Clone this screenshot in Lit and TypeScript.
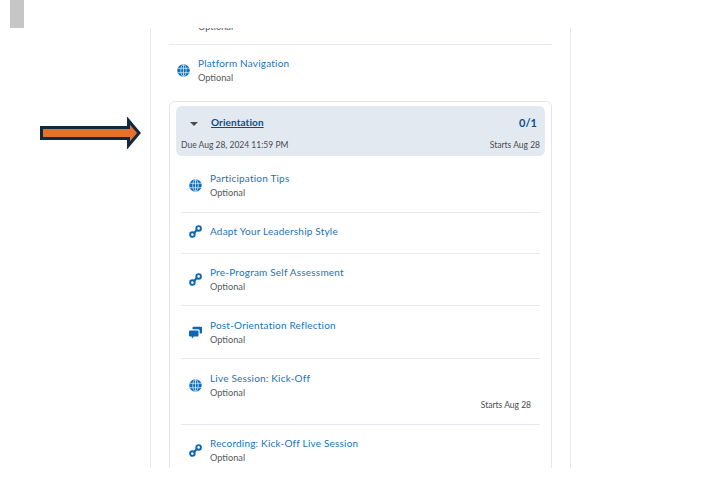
import { LitElement, html, css, svg } from "lit";
import { customElement } from "lit/decorators.js";

const globe = svg`<circle cx="6.500" cy="6.500" r="6.200" fill="#0a6fbe"/><g fill="none" stroke="#fff" stroke-width=".8" opacity=".85"><ellipse cx="6.500" cy="6.500" rx="2.700" ry="6"/><path d="M6.500 .5v12M1 4.300h11M1 8.700h11"/></g>`;
const link = svg`<g fill="none" stroke="#0a67b4" stroke-width="1.900"><circle cx="3.400" cy="9.600" r="2.300"/><circle cx="9.600" cy="3.400" r="2.300"/><path d="M4.600 8.400l3.800-3.800" stroke-width="2.100"/></g>`;
const chat = svg`<path fill="#0a67b4" d="M1 4.500h7.500q1 0 1 1v4q0 1-1 1H4.800L2.800 12.800V10.500H1q-1 0-1-1v-4q0-1 1-1z"/><path fill="#0a67b4" d="M4.500 .8h7.500q1 0 1 1v4.700q0 1-1 1h-1.300V4.800q0-1.500-1.500-1.500H3.500V1.800q0-1 1-1z"/>`;

interface Item { title: string; icon: unknown; optional: boolean; starts?: boolean; h: number; pad: number; }

const items: Item[] = [
  { title: "Participation Tips", icon: globe, optional: true, h: 57, pad: 15 },
  { title: "Adapt Your Leadership Style", icon: link, optional: false, h: 41, pad: 11 },
  { title: "Pre-Program Self Assessment", icon: link, optional: true, h: 52, pad: 11 },
  { title: "Post-Orientation Reflection", icon: chat, optional: true, h: 53, pad: 12 },
  { title: "Live Session: Kick-Off", icon: globe, optional: true, starts: true, h: 66, pad: 12 },
  { title: "Recording: Kick-Off Live Session", icon: link, optional: true, h: 53, pad: 11 },
];

@customElement("app-root")
export class AppRoot extends LitElement {
  static styles = css`
    :host { display: block; width: 720px; height: 495px; position: relative; overflow: hidden; background: #fff; font-family: Lato, "Liberation Sans", sans-serif; color: #494c4e; }
    .topbar { height: 28px; }
    .chip { width: 14px; height: 28px; margin-left: 10px; background: #c6c6c6; }
    .panel { box-sizing: border-box; width: 421px; height: 440px; margin-left: 150px; border-left: 1px solid #e6eaf0; border-right: 1px solid #e6eaf0; padding: 0 18px; overflow: hidden; }
    .cut { height: 16px; border-bottom: 1px solid #e6eaf0; overflow: hidden; }
    .cut .opt { margin-top: -8px; display: block; padding-left: 29px; }
    .title { font-size: 10px; line-height: 14px; color: #1a73b8; letter-spacing: .2px; white-space: nowrap; }
    .opt { font-size: 9.2px; line-height: 13px; margin-top: 1px; color: #565a5c; }
    svg.ic { width: 13px; height: 13px; flex: none; }
    .plat { padding: 11px 0 0 8px; height: 45px; }
    .module { box-sizing: border-box; border: 1px solid #e3e7ec; border-radius: 6px; padding: 4px 6px 0; }
    .head { background: #e3e9f1; border-radius: 6px; height: 50px; box-sizing: border-box; padding: 9px 5px 0 5px; display: flex; flex-direction: column; gap: 9px; }
    .head-top { display: flex; align-items: center; justify-content: space-between; height: 14px; }
    .left { display: flex; align-items: center; }
    .caret { width: 0; height: 0; border-left: 4px solid transparent; border-right: 4px solid transparent; border-top: 4px solid #494c4e; margin: 3px 13px 0 9px; }
    .mod-title { font-size: 10px; font-weight: 700; color: #0b4f85; text-decoration: underline; letter-spacing: .1px; }
    .count { font-size: 11px; font-weight: 700; color: #0b4f85; padding-right: 3px; }
    .head-bot { display: flex; justify-content: space-between; font-size: 8.5px; line-height: 12px; color: #494c4e; margin-top: 1px; }
    .list { padding: 0 5px; }
    .item { box-sizing: border-box; padding-left: 8px; border-bottom: 1px solid #e6eaf0; }
    .item:last-child { border-bottom: none; }
    .body { display: flex; align-items: center; gap: 8px; }
    .starts { font-size: 8.5px; line-height: 12px; color: #494c4e; text-align: right; padding-right: 9px; }
    .arrow { position: absolute; left: 40px; top: 117px; width: 102px; height: 32px; }
  `;

  render() {
    return html`
      <div class="topbar"><div class="chip"></div></div>
      <div class="panel">
        <div class="cut"><span class="opt">Optional</span></div>
        <div class="plat">
          <div class="body">
            <svg class="ic" viewBox="0 0 13 13">${globe}</svg>
            <div><div class="title">Platform Navigation</div><div class="opt">Optional</div></div>
          </div>
        </div>
        <div class="module">
          <div class="head">
            <div class="head-top">
              <div class="left"><span class="caret"></span><span class="mod-title">Orientation</span></div>
              <span class="count">0/1</span>
            </div>
            <div class="head-bot"><span>Due Aug 28, 2024 11:59 PM</span><span>Starts Aug 28</span></div>
          </div>
          <div class="list">
            ${items.map((it) => html`
              <div class="item" style="height:${it.h}px;padding-top:${it.pad}px">
                <div class="body">
                  <svg class="ic" viewBox="0 0 13 13">${it.icon}</svg>
                  <div>
                    <div class="title">${it.title}</div>
                    ${it.optional ? html`<div class="opt">Optional</div>` : ""}
                  </div>
                </div>
                ${it.starts ? html`<div class="starts">Starts Aug 28</div>` : ""}
              </div>`)}
          </div>
        </div>
      </div>
      <svg class="arrow" viewBox="0 0 102 32">
        <path d="M1.500 10.500H88.500V3.500L99 16 88.500 28.500V21.500H1.500z" fill="#ea6f2d" stroke="#0e2a3f" stroke-width="3"/>
      </svg>
    `;
  }
}
